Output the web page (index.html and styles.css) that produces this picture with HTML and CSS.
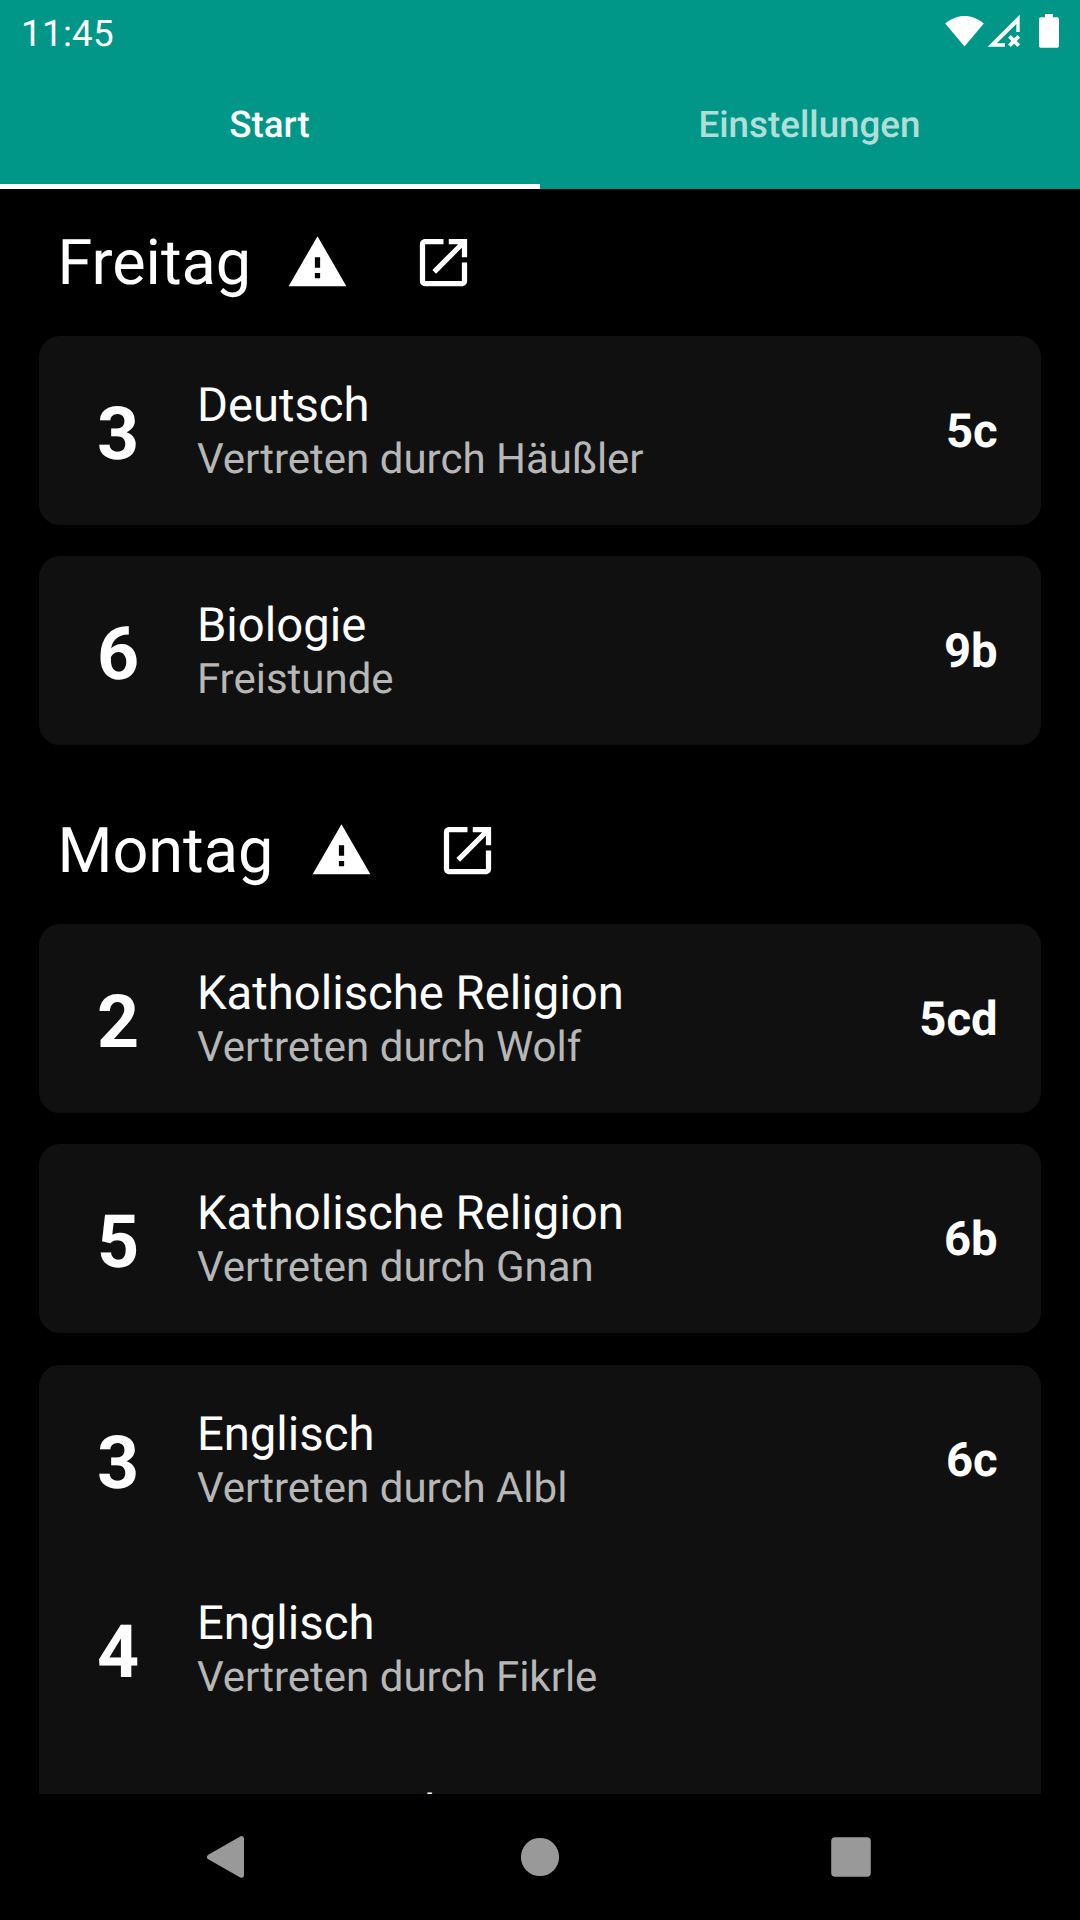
FILE: index.html
```html
<!DOCTYPE html>
<html lang="de">
<head>
<meta charset="utf-8">
<title>Vertretungsplan</title>
<link rel="stylesheet" href="styles.css">
</head>
<body>
<svg class="defs" width="0" height="0" aria-hidden="true">
  <symbol id="warning" viewBox="0 0 24 24"><path d="M1 21h22L12 2 1 21zm12-3h-2v-2h2v2zm0-4h-2v-4h2v4z"/></symbol>
  <symbol id="open" viewBox="0 0 24 24"><path d="M19 19H5V5h7V3H5c-1.11 0-2 .9-2 2v14c0 1.1.89 2 2 2h14c1.1 0 2-.9 2-2v-7h-2v7zM14 3v2h3.59l-9.83 9.83 1.41 1.41L19 6.41V10h2V3h-7z"/></symbol>
</svg>
<div class="screen">
  <header class="appbar">
    <div class="status">
      <span class="clock">11:45</span>
      <svg class="status-icons" width="120" height="40" viewBox="0 0 120 40">
        <path d="M5.2 9.5C17 -.6 32 -.6 43.8 9.5L24.5 32.6Z"/>
        <path fill-rule="evenodd" d="M79.700 .8V18H76.3V10L56.8 29.3H65V32.8H47.6Z"/>
        <path class="cross" d="M69.400 22.300l9.400 9.400M78.800 22.300l-9.400 9.400"/>
        <path d="M105 0h8v3.300h4.200q1.800 0 1.800 1.800V32q0 1.800-1.800 1.800H100.800Q99 33.800 99 32V5.100q0-1.800 1.800-1.800H105z"/>
      </svg>
    </div>
    <nav class="tabs">
      <div class="tab active">Start</div>
      <div class="tab">Einstellungen</div>
    </nav>
  </header>
  <main class="content">
    <section class="day">
      <div class="day-head"><h2 class="friday">Freitag</h2><span class="icon-btn"><svg><use href="#warning"/></svg></span><span class="icon-btn"><svg><use href="#open"/></svg></span></div>
      <div class="card">
        <div class="row"><div class="hour">3</div><div class="info"><div class="subject">Deutsch</div><div class="note">Vertreten durch Häußler</div></div><div class="class">5c</div></div>
      </div>
      <div class="card">
        <div class="row"><div class="hour">6</div><div class="info"><div class="subject">Biologie</div><div class="note">Freistunde</div></div><div class="class">9b</div></div>
      </div>
    </section>
    <section class="day">
      <div class="day-head"><h2>Montag</h2><span class="icon-btn"><svg><use href="#warning"/></svg></span><span class="icon-btn"><svg><use href="#open"/></svg></span></div>
      <div class="card">
        <div class="row"><div class="hour">2</div><div class="info"><div class="subject">Katholische Religion</div><div class="note">Vertreten durch Wolf</div></div><div class="class">5cd</div></div>
      </div>
      <div class="card">
        <div class="row"><div class="hour">5</div><div class="info"><div class="subject">Katholische Religion</div><div class="note">Vertreten durch Gnan</div></div><div class="class">6b</div></div>
      </div>
      <div class="card">
        <div class="row"><div class="hour">3</div><div class="info"><div class="subject">Englisch</div><div class="note">Vertreten durch Albl</div></div><div class="class">6c</div></div>
        <div class="row"><div class="hour">4</div><div class="info"><div class="subject">Englisch</div><div class="note">Vertreten durch Fikrle</div></div></div>
        <div class="row"><div class="info last"><div class="subject">Französisch</div></div></div>
      </div>
    </section>
  </main>
  <footer class="navbar">
    <svg width="42" height="44" viewBox="0 0 42 44"><path class="round" d="M33.500 3.700V40.300L1.500 22Z"/></svg>
    <svg width="42" height="44" viewBox="0 0 42 44"><circle cx="21" cy="22" r="19.100"/></svg>
    <svg width="42" height="44" viewBox="0 0 42 44"><rect x="1.200" y="2.200" width="39.600" height="39.600" rx="4"/></svg>
  </footer>
</div>
</body>
</html>
```

FILE: styles.css
```css
* {
  box-sizing: border-box;
}

body {
  margin: 0;
  background: #000;
  color: #fff;
  font-family: Roboto, sans-serif;
  text-rendering: geometricPrecision;
}

.defs {
  display: block;
}

svg {
  fill: currentColor;
  overflow: visible;
}

.screen {
  display: flex;
  flex-direction: column;
  width: 1080px;
  height: 1920px;
  overflow: hidden;
}

.appbar {
  height: 189px;
  flex: none;
  background: #009688;
}

.status {
  display: flex;
  justify-content: space-between;
  height: 63px;
  padding: 12px 20px 0 21px;
}

.clock {
  font-size: 36.75px;
  line-height: 43px;
  letter-spacing: 0.3px;
}

.status-icons {
  margin-top: 2px;
}

.cross {
  fill: none;
  stroke: currentColor;
  stroke-width: 3.8;
}

.tabs {
  display: flex;
  height: 126px;
}

.tab {
  flex: 1;
  display: flex;
  justify-content: center;
  padding: 40px 1px 0 0;
  border-bottom: 5.25px solid transparent;
  font-size: 36.75px;
  line-height: 43px;
  font-weight: 500;
  color: rgba(255, 255, 255, 0.7);
}

.tab.active {
  color: #fff;
  border-bottom-color: #fff;
}

.content {
  flex: 1;
  min-height: 0;
  overflow: hidden;
  padding: 0 39.375px;
}

.day-head {
  display: flex;
  align-items: center;
  height: 147px;
  padding-left: 18px;
}

.day-head h2 {
  margin: 0 4.75px 0 0;
  padding-top: 2px;
  font-size: 63px;
  line-height: 74px;
  font-weight: 400;
}

.day-head .friday {
  margin-right: 3.75px;
}

.icon-btn {
  display: flex;
  align-items: center;
  justify-content: center;
  width: 126px;
  height: 126px;
}

.icon-btn svg {
  width: 63px;
  height: 63px;
}

.card {
  margin-bottom: 31px;
  border-radius: 21px;
  background: #101010;
}

.card:nth-child(odd) {
  margin-bottom: 32px;
}

.row {
  display: flex;
  align-items: center;
  height: 189px;
  padding-right: 43px;
}

.hour {
  width: 157.5px;
  padding-top: 6px;
  text-align: center;
  font-size: 73.5px;
  line-height: 86px;
  font-weight: 700;
}

.info {
  flex: 1;
  padding-top: 2px;
}

.info.last {
  align-self: flex-start;
  margin-left: 157.5px;
  padding-top: 42px;
}

.subject {
  margin-bottom: 2px;
  font-size: 47.25px;
  line-height: 55px;
}

.note {
  font-size: 42px;
  line-height: 50px;
  color: #b7b7b7;
}

.class {
  padding-top: 2px;
  font-size: 47.25px;
  line-height: 55px;
  font-weight: 700;
}

.navbar {
  display: flex;
  flex: none;
  align-items: center;
  justify-content: center;
  gap: 269px;
  height: 126px;
  background: #000;
  color: #999;
}

.round {
  stroke: currentColor;
  stroke-width: 5;
  stroke-linejoin: round;
}
```
